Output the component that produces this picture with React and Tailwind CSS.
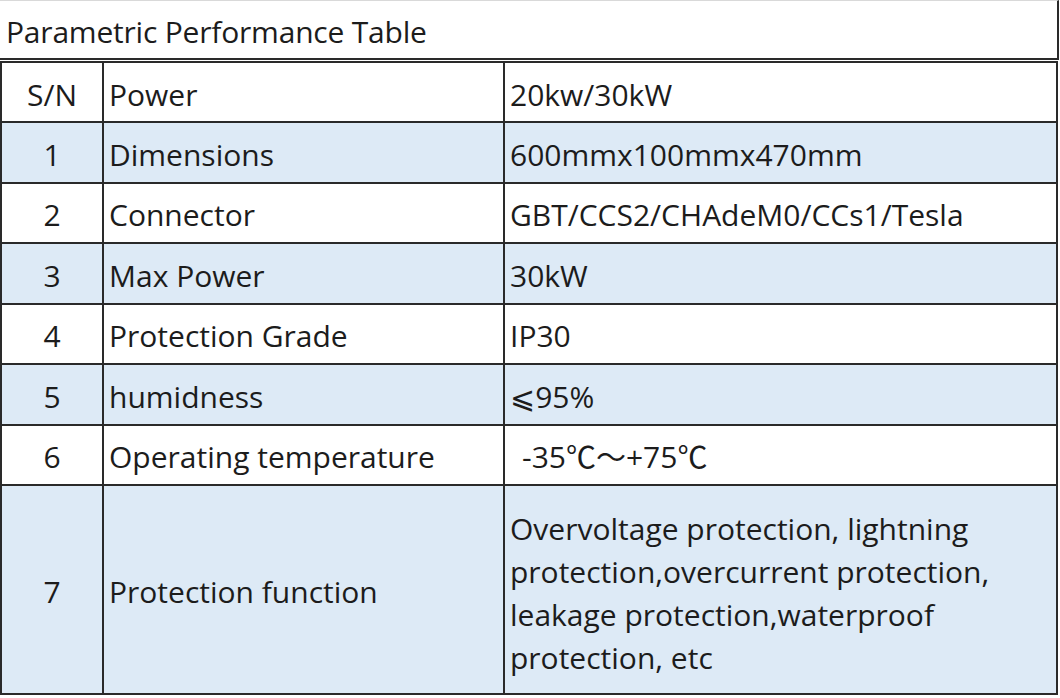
const rows = [
  { n: "1", label: "Dimensions", value: "600mmx100mmx470mm", blue: true },
  { n: "2", label: "Connector", value: "GBT/CCS2/CHAdeM0/CCs1/Tesla", blue: false },
  { n: "3", label: "Max Power", value: "30kW", blue: true },
  { n: "4", label: "Protection Grade", value: "IP30", blue: false },
  { n: "5", label: "humidness", value: "⩽95%", blue: true },
  { n: "6", label: "Operating temperature", value: "-35℃～+75℃", blue: false, indent: true },
];

const font = { fontFamily: '"Open Sans", "Noto Sans CJK SC", "DejaVu Sans", sans-serif' };

export default function App() {
  return (
    <div className="w-[1060px] h-[698px] bg-white text-[#1c1c1c] text-[30px] overflow-hidden" style={font}>
      {/* title bar */}
      <div className="w-[1059px] h-[60px] border-t border-t-[#d9d9d9] border-r-2 border-r-[#2a2a2a] border-b-2 border-b-[#2a2a2a] flex items-center pl-[6px] pt-[4px] leading-none tracking-[-0.2px]">
        Parametric Performance Table
      </div>

      <table className="mt-[1px] w-[1058px] border-collapse table-fixed border-2 border-[#2a2a2a]">
        <colgroup>
          <col className="w-[102px]" />
          <col className="w-[401px]" />
          <col />
        </colgroup>
        <tbody>
          <tr className="h-[60px] bg-white">
            <td className="border-2 border-[#2a2a2a] text-center pt-[4px]">S/N</td>
            <td className="border-2 border-[#2a2a2a] pl-[5px] pt-[4px]">Power</td>
            <td className="border-2 border-[#2a2a2a] pl-[5px] pt-[4px]">20kw/30kW</td>
          </tr>
          {rows.map((r) => (
            <tr key={r.n} className={r.blue ? "h-[60.5px] bg-[#ddeaf6]" : "h-[60.5px] bg-white"}>
              <td className="border-2 border-[#2a2a2a] text-center pt-[4px]">{r.n}</td>
              <td className="border-2 border-[#2a2a2a] pl-[5px] pt-[4px]">{r.label}</td>
              <td className={r.indent ? "border-2 border-[#2a2a2a] pl-[17px] pt-[4px]" : "border-2 border-[#2a2a2a] pl-[5px] pt-[4px]"}>
                {r.value}
              </td>
            </tr>
          ))}
          <tr className="h-[209px] bg-[#ddeaf6]">
            <td className="border-2 border-[#2a2a2a] text-center pt-[4px]">7</td>
            <td className="border-2 border-[#2a2a2a] pl-[5px] pt-[4px]">Protection function</td>
            <td className="border-2 border-[#2a2a2a] pl-[5px] pr-[40px] pt-[6px] leading-[43px]">
              Overvoltage protection, lightning protection,overcurrent protection, leakage protection,waterproof protection, etc
            </td>
          </tr>
        </tbody>
      </table>
    </div>
  );
}
